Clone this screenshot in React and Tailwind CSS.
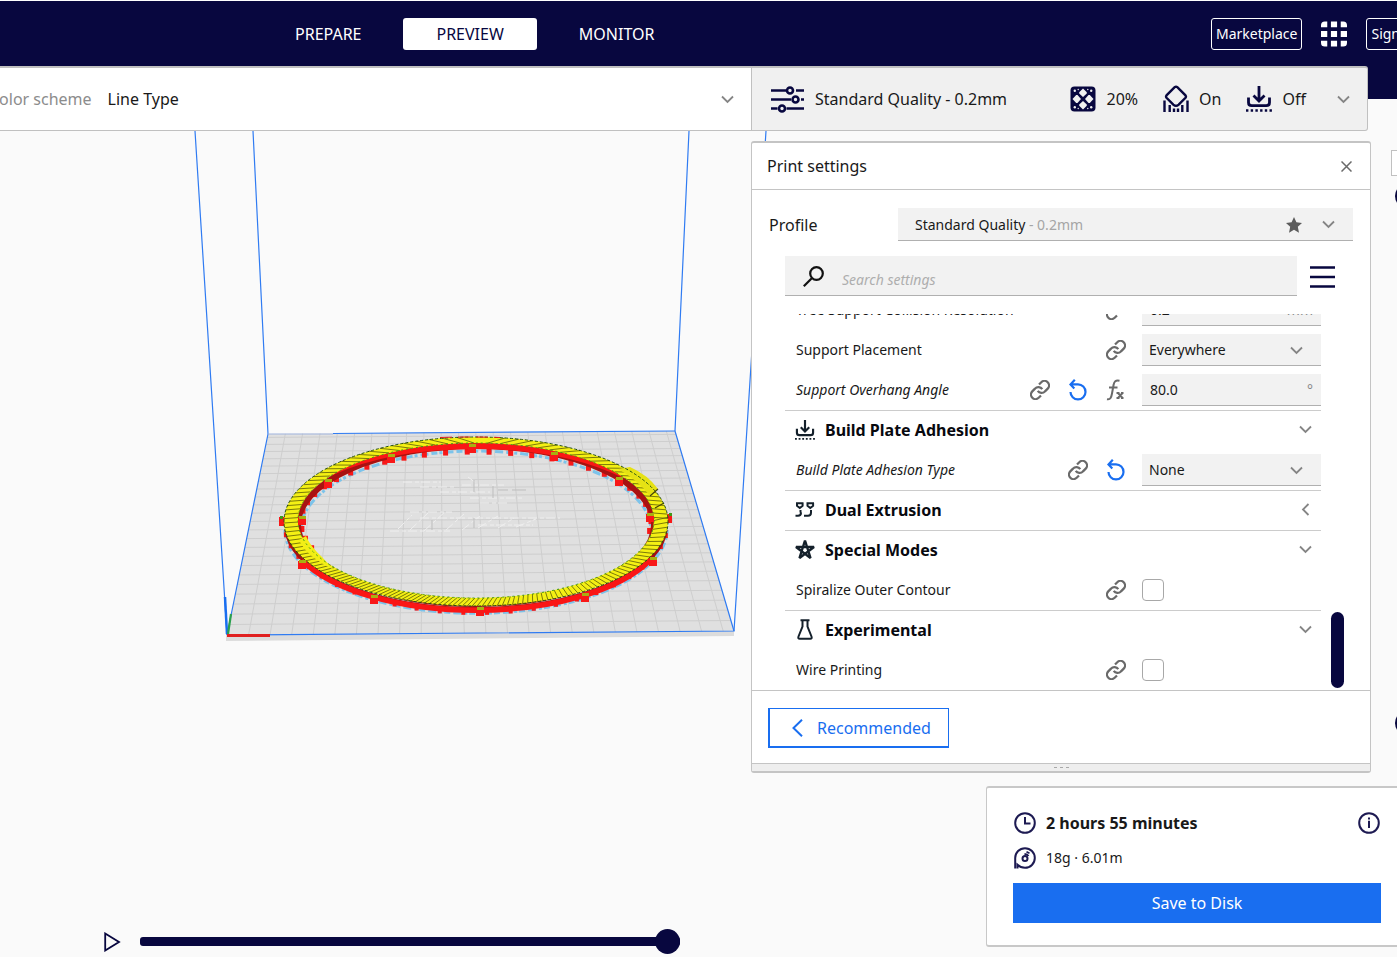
import { useState } from 'react';

const NAVY = '#08073f';

const Chevron = ({ className = '', left = false }) => (
  <svg className={`shrink-0 ${className}`} width="13" height="13" viewBox="0 0 13 13" fill="none" stroke="#858585" strokeWidth="1.8">
    {left ? <path d="M9.5 1 4 6.5 9.500 12" /> : <path d="M1 3.5 6.5 9 12 3.5" />}
  </svg>
);

const SlidersIcon = () => (
  <svg width="33" height="27" viewBox="0 0 33 27" fill="none" stroke={NAVY} strokeWidth="2.600" className="shrink-0">
    <path d="M0 4.500h15M25 4.500h8M0 13.500h20M30 13.500h3M0 22.500h6.500M15.500 22.500H33" />
    <circle cx="19" cy="4.500" r="3" />
    <circle cx="24.500" cy="13.500" r="3" />
    <circle cx="11" cy="22.500" r="3" />
  </svg>
);

const InfillIcon = () => (
  <svg width="26" height="26" viewBox="0 0 26 26" className="shrink-0">
    <rect x="0.5" y="0.5" width="25" height="25" rx="4" fill={NAVY} />
    <g fill="#f0f0f0">
      <path d="m13 2.500 3.800 3.700v1.300L13 11 9.200 7.500V6.200ZM13 15l3.800 3.500v1.300L13 23.500l-3.800-3.700v-1.300ZM6.200 9h1.300L11 13l-3.500 4H6.200l-3.700-4ZM18.500 9h1.300l3.700 4-3.700 4h-1.300L15 13Z" />
      <circle cx="4.800" cy="4.800" r="1.200" />
      <circle cx="21.200" cy="4.800" r="1.200" />
      <circle cx="4.800" cy="21.200" r="1.200" />
      <circle cx="21.200" cy="21.200" r="1.200" />
      <circle cx="8.200" cy="3.500" r="0.700" />
      <circle cx="17.800" cy="3.500" r="0.700" />
      <circle cx="8.200" cy="22.500" r="0.700" />
      <circle cx="17.800" cy="22.500" r="0.700" />
    </g>
  </svg>
);

const SupportIcon = () => (
  <svg width="26" height="28" viewBox="0 0 26 28" fill="none" stroke={NAVY} strokeWidth="2.400" className="shrink-0">
    <path d="M11.700 2.200a2 2 0 0 1 2.600 0l8.200 8.200a2 2 0 0 1 0 2.400l-6.800 6.800a4 4 0 0 1-5.400 0l-6.800-6.800a2 2 0 0 1 0-2.400Z" />
    <path d="M1.500 15.500V27M6.700 20v7M11 23.500V27M15 23.500V27M19.300 20v7M24.500 15.500V27" />
  </svg>
);

const AdhesionIcon = ({ size = 26, color = NAVY }) => (
  <svg width={size} height={size} viewBox="0 0 26 26" fill="none" stroke={color} className="shrink-0">
    <path strokeWidth="2.800" d="M13 0v14.500M7.500 9.500l5.500 5.500 5.500-5.500" />
    <path strokeWidth="2.800" d="M2.500 11.500v5q0 3.200 3.200 3.200h14.600q3.200 0 3.200-3.200v-5" />
    <path strokeWidth="2.400" strokeDasharray="2.400 2.300" d="M0 24.500h26" />
  </svg>
);

const ExtruderIcon = () => (
  <svg width="20" height="16" viewBox="0 0 20 16" fill="none" stroke="#14202b" strokeWidth="2">
    <path d="M1 1.200h7.500M2 1v2.700L4.800 6l2.800-2.300V1M5.500 8v2.500M.500 13.800h2.500q3 0 3-3.300" />
    <path d="M11.500 1.200H19M12.500 1v2.700L15.300 6l2.800-2.300V1M16 8v2.500M9 13.800h4q3 0 3-3.300" />
  </svg>
);

const StarLinesIcon = () => (
  <svg width="22" height="21" viewBox="0 0 22 21" fill="none" stroke="#14202b" strokeWidth="2.400" strokeLinejoin="bevel">
    <path d="m11 1.500 5.500 17.500L2 8h18L5.500 19Z" />
  </svg>
);

const FlaskIcon = () => (
  <svg width="18" height="21" viewBox="0 0 18 21" fill="none" stroke="#14202b" strokeWidth="2">
    <path d="M4.500 1.200h9M6.500 1.500V7.500L2.500 17.500q-.800 2.300 1.300 2.300h10.400q2.100 0 1.300-2.300L11.500 7.500v-6" />
  </svg>
);

const LinkIcon = () => (
  <svg width="20" height="20" viewBox="1 1 22 22" fill="none" stroke="#6a6a6a" strokeWidth="2.500" className="shrink-0">
    <path d="M9.500 13a5 5 0 0 0 8 .500l3-3a5 5 0 0 0-7.070-7.070l-2.500 2.500" />
    <path d="M14.500 11a5 5 0 0 0-8-.500l-3 3a5 5 0 0 0 7.070 7.070l2.500-2.500" />
  </svg>
);

const ResetIcon = () => (
  <svg width="20" height="22" viewBox="0 0 20 22" fill="none" stroke="#196ef0" strokeWidth="2.200" className="shrink-0">
    <path d="M3 5.400h7a7.500 7.500 0 1 1-7.500 7.500M6.800.800 2.500 5.400l3.800 4.100" />
  </svg>
);

const FunctionIcon = () => (
  <svg width="20" height="22" viewBox="0 0 20 22" fill="none" stroke="#6a6a6a" strokeWidth="2" className="shrink-0">
    <path d="M1 20.200c3.500.800 4.300-2 5-5.700l1.600-8.700C8.200 2.500 9.500.800 13.500 1.700M3 8.500h8.500M12 14l4.500 5M16.500 14 12 19M10.500 14h3M10.500 19h3M15 14h2.500M15 19h2.500" />
  </svg>
);

const icons = { link: LinkIcon, reset: ResetIcon, fx: FunctionIcon };

const settings = [
  { type: 'number', label: 'Tree Support Collision Resolution', value: '0.2', unit: 'mm', icons: ['link'] },
  { type: 'select', label: 'Support Placement', value: 'Everywhere', icons: ['link'] },
  { type: 'number', label: 'Support Overhang Angle', value: '80.0', unit: '°', icons: ['link', 'reset', 'fx'], changed: true },
  { type: 'category', label: 'Build Plate Adhesion', icon: <AdhesionIcon size={20} color="#14202b" /> },
  { type: 'select', label: 'Build Plate Adhesion Type', value: 'None', icons: ['link', 'reset'], changed: true },
  { type: 'category', label: 'Dual Extrusion', icon: <ExtruderIcon />, closed: true },
  { type: 'category', label: 'Special Modes', icon: <StarLinesIcon /> },
  { type: 'check', label: 'Spiralize Outer Contour', icons: ['link'] },
  { type: 'category', label: 'Experimental', icon: <FlaskIcon /> },
  { type: 'check', label: 'Wire Printing', icons: ['link'] },
];

function Control({ id, item }) {
  if (item.type === 'select') {
    return (
      <div className="relative flex items-center">
        <select id={id} className="h-8 w-full appearance-none border-b border-[#b0b0b0] bg-[#f2f2f2] pl-[7px] text-sm text-[#191919]">
          <option>{item.value}</option>
        </select>
        <Chevron className="pointer-events-none absolute right-[18px]" />
      </div>
    );
  }
  if (item.type === 'number') {
    return (
      <div className="flex h-8 items-center border-b border-[#b0b0b0] bg-[#f2f2f2] px-2">
        <input id={id} defaultValue={item.value} className="min-w-0 flex-1 bg-transparent text-sm text-[#191919] outline-none" />
        <span className="text-sm text-[#888]">{item.unit}</span>
      </div>
    );
  }
  return (
    <input
      id={id}
      type="checkbox"
      className="block size-[22px] appearance-none rounded-[4px] border border-[#a8a8a8] bg-white checked:bg-[#196ef0]"
    />
  );
}

function SettingRow({ item }) {
  const id = item.label.toLowerCase().replaceAll(' ', '-');

  if (item.type === 'category') {
    return (
      <button className="flex h-10 w-full shrink-0 items-center border-t border-[#cccccc] pr-[9px] pb-[2px] pl-2 text-left">
        <span className="flex w-6 justify-center">{item.icon}</span>
        <span className="ml-2 flex-1 text-base font-bold text-[#08090f]">{item.label}</span>
        <Chevron left={item.closed} />
      </button>
    );
  }

  return (
    <div className="flex h-10 shrink-0 items-center pl-[11px]">
      <label htmlFor={id} className={`flex-1 text-sm text-[#191919] ${item.changed ? 'italic' : ''}`}>
        {item.label}
      </label>
      <div className="flex items-center gap-[18px]">
        {item.icons.map((name) => {
          const Icon = icons[name];
          return <Icon key={name} />;
        })}
      </div>
      <div className="ml-4 w-[179px]">
        <Control id={id} item={item} />
      </div>
    </div>
  );
}

// ---- 3D view ----

const BACK_L = [268, 434];
const BACK_R = [675, 431];
const FRONT_L = [227, 635];
const FRONT_R = [734, 631];
const CELLS = 23.5;

const lerp = (a, b, t) => [a[0] + (b[0] - a[0]) * t, a[1] + (b[1] - a[1]) * t];
const line = (a, b) => `M${a[0].toFixed(1)} ${a[1].toFixed(1)}L${b[0].toFixed(1)} ${b[1].toFixed(1)}`;

function gridPath() {
  let d = '';
  for (let i = 1; i < CELLS; i++) {
    const t = i / CELLS;
    d += line(lerp(BACK_L, BACK_R, t), lerp(FRONT_L, FRONT_R, t));
    // rows get narrower towards the back of the bed
    const v = 1 - t;
    const s = v / (1.245 - 0.245 * v);
    d += line(lerp(BACK_L, FRONT_L, s), lerp(BACK_R, FRONT_R, s));
  }
  return d;
}

const outer = (a, grow = 0) => [476 + (192 + grow) * Math.cos(a), 521.5 + (84.5 + grow) * Math.sin(a)];
const inner = (a, grow = 0) => [476 + (178 + grow) * Math.cos(a), 520.5 + (77.5 + grow) * Math.sin(a)];

function hatchPath() {
  let d = '';
  let a = 0;
  while (a < Math.PI * 2) {
    const sin = Math.sin(a);
    const cos = Math.cos(a);
    let skew = 0.04 * sin - 0.05 * Math.max(cos, 0);
    if (sin < 0) skew = 0.09 * sin * (cos < 0 ? 1 : -1);
    d += line(inner(a), outer(a + skew));
    const gap = sin < 0 ? 4.6 + 9 * sin * sin : 4.6;
    a += gap / Math.hypot(185 * sin, 81 * cos);
  }
  return d;
}

function teeth() {
  const out = [];
  for (let i = 0; i < 30; i++) {
    const a = Math.PI - 0.35 + (i * (Math.PI + 0.6)) / 30;
    const [x, y] = inner(a, -3);
    out.push([x, y + 5 * Math.abs(Math.sin(a)), 5]);
  }
  for (let i = 0; i < 24; i++) {
    const a = 0.15 + (i * 2.85) / 23;
    const [x, y] = outer(a);
    out.push([x, y + 6 * Math.sin(a), 4]);
  }
  return out;
}

const blocks = [
  [472, 449], [391, 459], [328, 484], [302, 521], [554, 457], [619, 482], [650, 518],
  [302, 565], [374, 600], [480, 612], [585, 598], [653, 562],
];

const ringPath =
  'M284 521.500a192 84.500 0 1 0 384 0a192 84.500 0 1 0-384 0ZM298 520.500a178 77.500 0 1 0 356 0a178 77.500 0 1 0-356 0Z';

function Scene() {
  return (
    <svg className="pointer-events-none absolute top-0 left-0" width="770" height="520" viewBox="0 131 770 520" fill="none" aria-label="Sliced model">
      <clipPath id="upper"><path d="M280 430h400v110H280Z" /></clipPath>
      <clipPath id="lower"><path d="M260 530h430v100H260Z" /></clipPath>

      <path d="M226 635 734 631v5L226 641Z" fill="#dcdcdc" />
      <path d="M268 434 675 431 734 631 227 635Z" fill="#e0e0e0" />
      <path d={gridPath()} stroke="#cecece" />

      <path
        d="M403 482h38M420 487h34M468 477l8 6M462 485h42M440 492h50M470 498h52M410 512h42M480 503h30M398 529l14-14M410 530l18-17M424 531l22-20M446 530l18-16M462 530l18-14M478 528l20-12M498 528l16-10M516 527l20-8M420 518h140M390 531h60M478 525h55"
        stroke="#efefef"
        strokeDasharray="9 3 4 2"
      />
      <path d="M474 480v12M493 486v12M512 490h14M474 518v10M432 520v10M498 490h10" stroke="#bdbdbd" />

      <g stroke="#2f7bf2" strokeWidth="1.200">
        <path d="M195 131 227 635M253 131 268 434M689 131 675 431M766 131 734 631" />
        <path d="M268 434 227 635M675 431 734 631 227 635" />
        <path d="M333 433.500 675 431" />
        <path d="M268 434h65" stroke="#9fb4dd" />
      </g>
      <path d="M227 634 225 597" stroke="#196ef0" strokeWidth="2.500" />
      <path d="M228 634l3-20" stroke="#2aa04c" strokeWidth="2.200" />
      <path d="M227 635.500h43" stroke="#e02020" strokeWidth="3" />

      <ellipse cx="476" cy="530" rx="175" ry="79" stroke="#7cc3ea" strokeWidth="3" strokeDasharray="6 2 3 3 8 3" clipPath="url(#upper)" />
      <ellipse cx="476" cy="529" rx="191" ry="84" stroke="#7cc3ea" strokeWidth="3.500" strokeDasharray="6 2 3 3 8 3" clipPath="url(#lower)" />

      {teeth().map(([x, y, s], i) => (
        <rect key={i} x={x - s / 2} y={y - s / 2} width={s} height={s + 1} fill="#f81818" />
      ))}
      <path d="M279 517h6v9h-6ZM667 514h5v9h-5Z" fill="#f81818" />
      <path d="M280 516h3v3h-3ZM669 513h3v3h-3Z" fill="#3f9a16" />
      <ellipse cx="476" cy="525" rx="178" ry="79" stroke="#a81212" strokeWidth="6" />
      <path d="M330 473Q388 446 476 446T624 475" stroke="#fa1616" strokeWidth="6" />
      <ellipse cx="476" cy="525" rx="190" ry="84" stroke="#a81212" strokeWidth="4" clipPath="url(#lower)" />
      <path d="M302 560A190 84 0 0 0 650 560" stroke="#fa1616" strokeWidth="5.500" />
      <path d={ringPath} fill="#f4f014" fillRule="evenodd" />
      <path d={hatchPath()} stroke="#5c5a08" strokeWidth="0.800" />
      <path d="M618 469Q638 480 650 496L658 489Q648 475 630 467Z" fill="#e6e214" />
      <path d="M650 496 658 489M655 508l9-5" stroke="#45440a" strokeWidth="1.200" />
      <path d="M299 540Q306 556 334 570L322 557Q310 546 306 536Z" fill="#f2ee16" />
      <ellipse cx="476" cy="521.500" rx="192" ry="84.500" stroke="#234e12" strokeDasharray="3 2" />
      <ellipse cx="476" cy="520.500" rx="178" ry="77.500" stroke="#3f9a16" strokeDasharray="2 3" />
      <path d="M440 437.500Q470 436.500 500 437.500" stroke="#e02020" strokeDasharray="12 6" />

      {blocks.map(([x, y]) => (
        <g key={`${x}-${y}`}>
          <rect x={x - 4} y={y - 4} width="8" height="8" fill="#f81818" />
          <rect x={x - 3} y={y - 5} width="7" height="3" fill="#a8b010" />
        </g>
      ))}
    </svg>
  );
}

// ---- page ----

function Header() {
  const [tab, setTab] = useState('PREVIEW');

  return (
    <header className="border-t border-white bg-[#08073f] pb-[33px]">
      <div className="flex h-[65px] items-center">
        <nav className="flex flex-1 gap-[9px] pl-[262px]">
          {['PREPARE', 'PREVIEW', 'MONITOR'].map((name) => (
            <button
              key={name}
              onClick={() => setTab(name)}
              className={`h-8 rounded-[3px] px-[33px] text-base ${tab === name ? 'bg-white text-[#08073f]' : 'text-white'}`}
            >
              {name}
            </button>
          ))}
        </nav>
        <div className="flex w-[186px] shrink-0 items-center">
          <button className="h-8 shrink-0 rounded-[3px] border border-white px-1 text-sm text-white">Marketplace</button>
          <button aria-label="Applications" className="mx-[19px] shrink-0">
            <svg width="26" height="26" viewBox="0 0 27 26" fill="#fff">
              <path d="M4 0h2.500v6H0V4a4 4 0 0 1 4-4ZM10.300 0h6.400v6h-6.400ZM20.500 0H23a4 4 0 0 1 4 4v2h-6.500ZM0 10h6.500v6H0ZM10.300 10h6.400v6h-6.400ZM20.500 10H27v6h-6.500ZM0 20h6.500v6H4a4 4 0 0 1-4-4ZM10.300 20h6.400v6h-6.400ZM20.500 20H27v2a4 4 0 0 1-4 4h-2.500Z" />
            </svg>
          </button>
          <button className="h-8 shrink-0 rounded-[3px] border border-white px-1 text-sm text-white">Sign in</button>
        </div>
      </div>
    </header>
  );
}

function Toolbar() {
  return (
    <div className="-mt-[33px] flex h-[65px] pr-[29px] text-base text-[#191919]">
      <div className="flex min-w-0 flex-1 items-center border-t-2 border-b border-[#c0c0c0] bg-white pr-[17px]">
        <label htmlFor="scheme" className="-ml-[11px] shrink-0 text-[#8c8c8c]">Color scheme</label>
        <select id="scheme" className="ml-4 flex-1 appearance-none bg-white">
          <option>Line Type</option>
        </select>
        <Chevron />
      </div>
      <button className="flex w-[617px] shrink-0 items-center rounded-r-[3px] border border-t-2 border-[#c0c0c0] bg-[#f0f0f0] pr-[17px] pl-[19px] text-left">
        <SlidersIcon />
        <span className="ml-[11px] flex-1">Standard Quality - 0.2mm</span>
        <InfillIcon />
        <span className="mr-[25px] ml-[10px]">20%</span>
        <SupportIcon />
        <span className="mr-[25px] ml-[10px]">On</span>
        <AdhesionIcon />
        <span className="mr-[31px] ml-[10px]">Off</span>
        <Chevron />
      </button>
    </div>
  );
}

function PrintSettings() {
  return (
    <section className="w-[620px] shrink-0 rounded-[3px] border border-y-2 border-[#c4c4c4] bg-white text-[#191919]">
      <div className="flex h-[47px] items-center justify-between border-b border-[#c4c4c4] pr-[18px] pl-[15px]">
        <h2 className="text-base">Print settings</h2>
        <button aria-label="Close">
          <svg width="11" height="11" viewBox="0 0 11 11" stroke="#6a6a6a" strokeWidth="1.500">
            <path d="m.500.500 10 10M10.500.500l-10 10" />
          </svg>
        </button>
      </div>

      <div className="flex items-center pt-[18px] pr-[17px] pl-[17px]">
        <span id="profile" className="flex-1 text-base">Profile</span>
        <button aria-labelledby="profile" aria-haspopup="listbox" className="flex h-[33px] w-[455px] items-center border-b border-[#b0b0b0] bg-[#f2f2f2] pt-px pr-[18px] pl-[17px] text-left text-sm">
          <span className="flex-1">
            Standard Quality <span className="text-[#a5a5a5]">- 0.2mm</span>
          </span>
          <svg width="16" height="16" viewBox="0 0 16 16" fill="#5c5c5c">
            <path d="m8 0 2.400 5.300 5.600.600-4.200 3.900 1.200 6L8 12.800 3 15.800l1.200-6L0 5.900l5.600-.600Z" />
          </svg>
          <Chevron className="ml-5" />
        </button>
      </div>

      <div className="flex items-center pt-[15px] pl-[33px]">
        <label className="flex h-10 w-[512px] items-center border-b border-[#b0b0b0] bg-[#f2f2f2] pt-px pl-[18px]">
          <svg width="21" height="21" viewBox="0 0 21 21" fill="none" stroke="#111" strokeWidth="2.200">
            <circle cx="13.500" cy="7.500" r="6.300" />
            <path d="M9 12 .800 20.200" />
          </svg>
          <input
            placeholder="Search settings"
            aria-label="Search settings"
            className="ml-[18px] flex-1 bg-transparent pt-[7px] text-sm italic outline-none placeholder:text-[#aeaeae]"
          />
        </label>
        <button aria-label="Setting visibility" className="ml-[13px] pt-px">
          <svg width="25" height="24" viewBox="0 0 25 24" stroke={NAVY} strokeWidth="2.600">
            <path d="M0 2.500h25M0 12h25M0 21.500h25" />
          </svg>
        </button>
      </div>

      <div className="mt-[18px] flex h-[376px] overflow-hidden pl-[33px]">
        <div className="flex w-[536px] flex-col justify-end">
          {settings.map((item) => (
            <SettingRow key={item.label} item={item} />
          ))}
        </div>
        <div className="mb-[2px] ml-[10px] h-[76px] w-[13px] self-end rounded-full bg-[#08073f]" />
      </div>

      <div className="border-t border-[#c4c4c4] px-4 pt-[17px] pb-[15px]">
        <button className="flex h-10 w-[181px] items-center border border-b-2 border-l-2 border-[#196ef0] pl-[22px] text-base text-[#196ef0]">
          <svg width="11" height="18" viewBox="0 0 11 18" fill="none" stroke="#196ef0" strokeWidth="2">
            <path d="M10 .800 1.500 9l8.500 8.200" />
          </svg>
          <span className="ml-[14px]">Recommended</span>
        </button>
      </div>
      <div className="flex h-2 items-start justify-center gap-[3px] border-t border-[#c4c4c4] bg-[#eeeeee] pt-[3px]">
        <i className="h-px w-[3px] bg-[#a8a8a8]" />
        <i className="h-px w-[3px] bg-[#a8a8a8]" />
        <i className="h-px w-[3px] bg-[#a8a8a8]" />
      </div>
    </section>
  );
}

function LayerSlider() {
  return (
    <div className="flex w-8 shrink-0 flex-col pt-[9px]">
      <input aria-label="Layer" className="h-[26px] w-8 border border-[#c0c0c0] bg-white" />
      <div className="mt-2 flex flex-1 flex-col items-center pb-[38px]">
        <button aria-label="Top layer" className="size-6 rounded-full bg-[#08073f]" />
        <div className="w-2 flex-1 bg-[#08073f]" />
        <button aria-label="Bottom layer" className="size-6 rounded-full bg-[#08073f]" />
      </div>
    </div>
  );
}

function SaveCard() {
  return (
    <section className="mt-[13px] ml-[235px] w-[422px] rounded-[3px] border border-y-2 border-[#c8c8c8] bg-white px-[26px] pt-[23px] pb-[22px] text-[#191919]">
      <div className="flex items-center pr-px pl-px">
        <svg width="22" height="22" viewBox="0 0 22 22" fill="none" stroke="#1d1a52" strokeWidth="2">
          <circle cx="11" cy="11" r="9.800" />
          <path d="M11 5v6.500h5.500" />
        </svg>
        <span className="ml-[10px] flex-1 text-base font-bold">2 hours 55 minutes</span>
        <button aria-label="Print details">
          <svg width="22" height="22" viewBox="0 0 22 22" fill="none" stroke="#1d1a52" strokeWidth="2">
            <circle cx="11" cy="11" r="9.800" />
            <path d="M11 8.800V16M11 5.500v2" />
          </svg>
        </button>
      </div>
      <div className="mt-3 flex items-center pl-px">
        <svg width="22" height="22" viewBox="0 0 22 22" fill="none" stroke="#1d1a52" strokeWidth="2">
          <path d="M1.200 21.500V11a9.800 9.800 0 1 1 9.800 9.800q-4.500 0-7.500-3v3.700" />
          <circle cx="11" cy="11.500" r="2.500" />
          <path d="M10.500 7q3 .200 4 2M12.500 4.800l3 1.500" strokeWidth="1.800" />
        </svg>
        <span className="ml-[10px] text-sm">18g · 6.01m</span>
      </div>
      <button className="mt-[14px] h-10 w-full bg-[#196ef0] text-base text-white">Save to Disk</button>
    </section>
  );
}

export default function App() {
  const [step, setStep] = useState(100);

  return (
    <div className="flex min-h-screen flex-col overflow-hidden bg-[#fafafa] font-['Noto_Sans',sans-serif]">
      <Header />
      <Toolbar />
      <main className="relative flex flex-1">
        <Scene />
        <div className="relative flex min-w-0 flex-1 items-end pr-[71px] pb-[3px] pl-[104px]">
          <button aria-label="Play" className="flex h-[25px] items-center">
            <svg width="17" height="20" viewBox="0 0 17 20" fill="none" stroke={NAVY} strokeWidth="1.800">
              <path d="M1.200 1.500v17L15 10Z" />
            </svg>
          </button>
          <input
            type="range"
            aria-label="Path position"
            value={step}
            onChange={(e) => setStep(e.target.value)}
            className="ml-[19px] h-[25px] min-w-0 flex-1 appearance-none bg-transparent [&::-webkit-slider-runnable-track]:h-[9px] [&::-webkit-slider-runnable-track]:rounded-[3px] [&::-webkit-slider-runnable-track]:bg-[#08073f] [&::-webkit-slider-thumb]:-mt-2 [&::-webkit-slider-thumb]:size-[25px] [&::-webkit-slider-thumb]:appearance-none [&::-webkit-slider-thumb]:rounded-full [&::-webkit-slider-thumb]:bg-[#08073f]"
          />
        </div>
        <div className="relative w-[646px] shrink-0 pt-[10px] pb-[10px]">
          <div className="flex gap-5">
            <PrintSettings />
            <LayerSlider />
          </div>
          <SaveCard />
        </div>
      </main>
    </div>
  );
}
